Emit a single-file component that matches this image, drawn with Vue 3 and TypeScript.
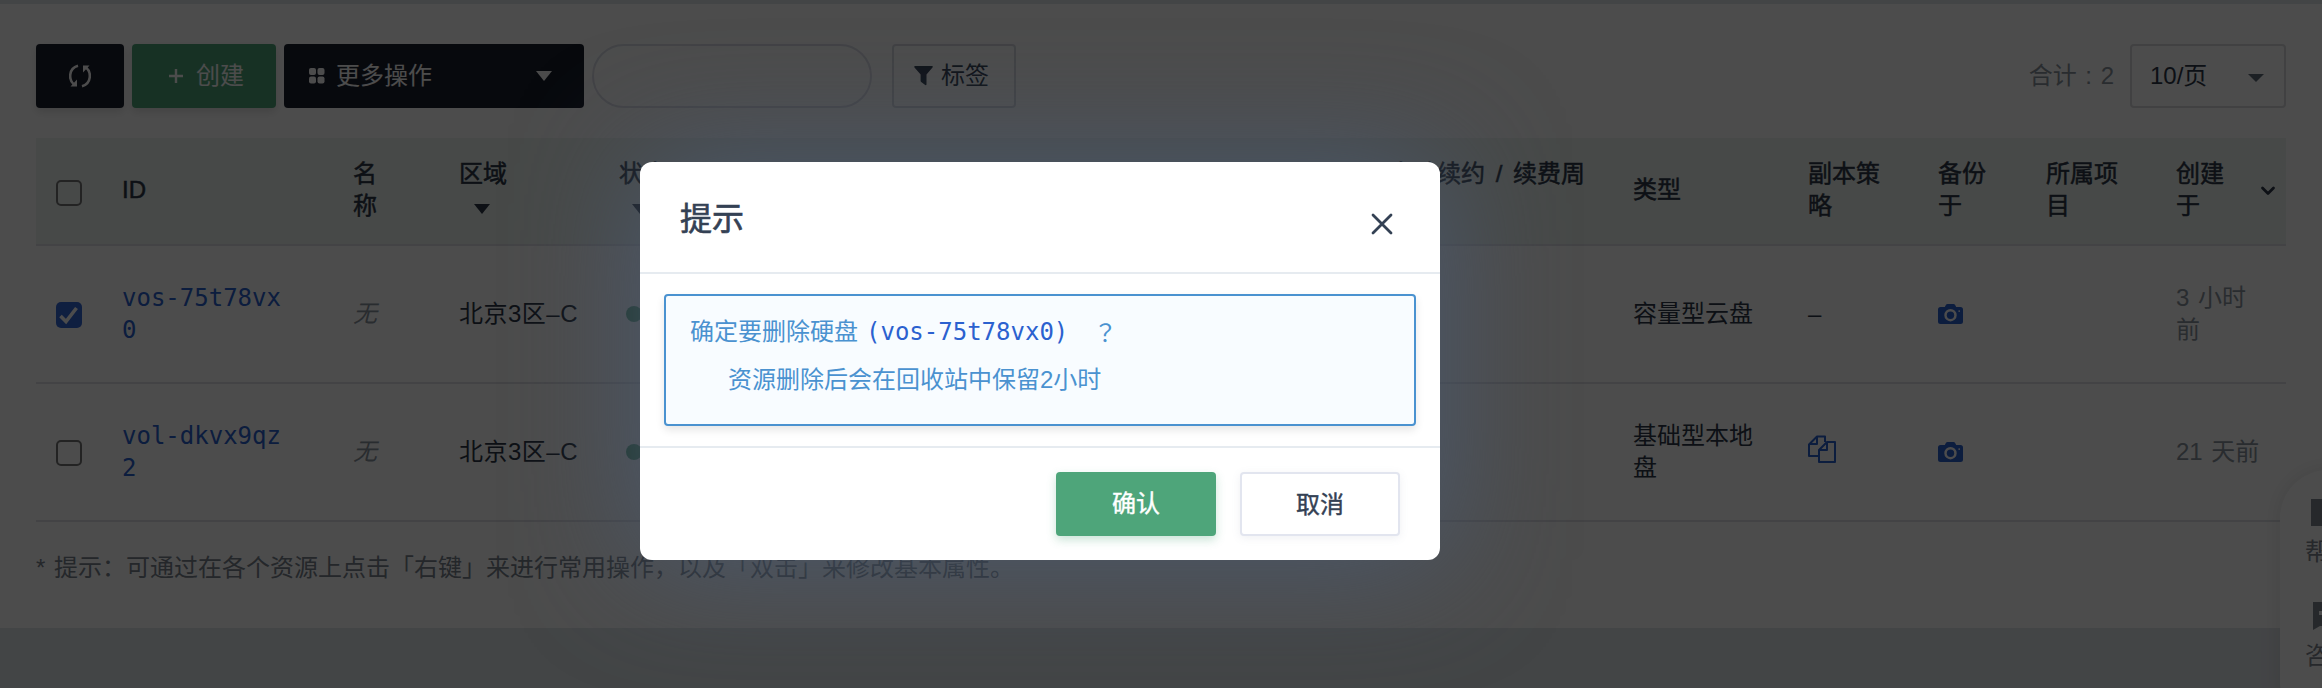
<script setup lang="ts">
interface Column {
  key: string
  lines: string[]
  filter?: boolean
  sort?: boolean
}

interface Volume {
  id: string[]
  zone: string
  checked: boolean
  type: string[]
  copies: boolean
  created: string[]
}

const columns: Column[] = [
  { key: 'id', lines: ['ID'] },
  { key: 'name', lines: ['名', '称'] },
  { key: 'zone', lines: ['区域'], filter: true },
  { key: 'status', lines: ['状态'], filter: true },
  { key: 'renew', lines: ['自动续约 / 续费周', '期'] },
  { key: 'type', lines: ['类型'] },
  { key: 'policy', lines: ['副本策', '略'] },
  { key: 'backup', lines: ['备份', '于'] },
  { key: 'project', lines: ['所属项', '目'] },
  { key: 'created', lines: ['创建', '于'], sort: true },
]

const volumes: Volume[] = [
  { id: ['vos-75t78vx', '0'], zone: '北京3区–C', checked: true, type: ['容量型云盘'], copies: false, created: ['3 小时', '前'] },
  { id: ['vol-dkvx9qz', '2'], zone: '北京3区–C', checked: false, type: ['基础型本地', '盘'], copies: true, created: ['21 天前'] },
]
</script>

<template>
  <div class="page">
    <main class="card">
      <div class="toolbar">
        <button class="btn dark refresh">
          <svg width="22" height="24" viewBox="0 0 22 24" fill="none" stroke="currentColor" stroke-width="2.600">
            <path d="M9 1.800C-.6 4.400-.6 16 5 20.500" />
            <path d="M13 22.200C22.600 19.600 22.600 8 17 3.500" />
            <path d="M1.500 22.500H8V15.500z M20.500 1.500H14V8.500z" fill="currentColor" stroke="none" />
          </svg>
        </button>
        <button class="btn green create">
          <svg width="14" height="14" viewBox="0 0 14 14" stroke="currentColor" stroke-width="2.400"><path d="M7 0v14M0 7h14" /></svg>
          <span>创建</span>
        </button>
        <button class="btn dark more">
          <svg width="16" height="16" viewBox="0 0 16 16" fill="currentColor">
            <rect width="7" height="7" rx="2" /><rect x="8.500" width="7" height="7" rx="2" />
            <rect y="8.500" width="7" height="7" rx="2" /><rect x="8.500" y="8.500" width="7" height="7" rx="2" />
          </svg>
          <span>更多操作</span>
          <svg class="caret" width="16" height="10" viewBox="0 0 16 10" fill="currentColor"><path d="M0 0h16L8 10z" /></svg>
        </button>
        <div class="search"></div>
        <button class="btn outline tag">
          <svg width="19" height="20" viewBox="0 0 19 20" fill="currentColor"><path d="M.8 0h17.400q1 .5.300 1.500L12.500 8.500V18.500q-.3 1-1.300.5L7.200 16q-.6-.5-.6-1.200V8.500L.5 1.500Q-.2.600.8 0z" /></svg>
          <span>标签</span>
        </button>
        <span class="total">合计 : 2</span>
        <div class="select">
          <span>10/页</span>
          <svg width="16" height="8" viewBox="0 0 16 8" fill="currentColor"><path d="M0 0h16L8 8z" /></svg>
        </div>
      </div>

      <div class="grid head">
        <div class="cell check"><span class="box"></span></div>
        <div v-for="col in columns" :key="col.key" class="cell" :class="col.key">
          <div class="lines">
            <span v-for="line in col.lines" :key="line">{{ line }}</span>
            <svg v-if="col.filter" class="filter" width="16" height="10" viewBox="0 0 16 10" fill="currentColor"><path d="M0 0h16L8 10z" /></svg>
          </div>
          <svg v-if="col.sort" class="sort" width="16" height="10" viewBox="0 0 16 10" fill="none" stroke="currentColor" stroke-width="2.800" stroke-linecap="round" stroke-linejoin="round"><path d="M2.500 2L8 7.500L13.500 2" /></svg>
        </div>
      </div>

      <div v-for="(vol, i) in volumes" :key="i" class="grid row">
        <div class="cell check">
          <span class="box" :class="{ on: vol.checked }">
            <svg v-if="vol.checked" width="20" height="20" viewBox="0 0 20 20" fill="none" stroke="currentColor" stroke-width="3.600"><path d="M1.500 11L7 16.500L17.500 3" /></svg>
          </span>
        </div>
        <div class="cell link"><div class="lines"><span v-for="l in vol.id" :key="l">{{ l }}</span></div></div>
        <div class="cell none">无</div>
        <div class="cell place">{{ vol.zone }}</div>
        <div class="cell"><span class="dot"></span></div>
        <div class="cell"></div>
        <div class="cell"><div class="lines"><span v-for="l in vol.type" :key="l">{{ l }}</span></div></div>
        <div class="cell">
          <svg v-if="vol.copies" class="copy" width="28" height="28" viewBox="0 0 28 28" fill="none" stroke="currentColor" stroke-width="2" stroke-linejoin="round">
            <path d="M17 7V1.500H9L1 9.500V21H11" /><path d="M9 1.500V9H1" />
            <path d="M19 7H27V27H11V15z" /><path d="M19 7V15H11" />
          </svg>
          <span v-else>–</span>
        </div>
        <div class="cell blue">
          <svg width="25" height="20" viewBox="0 0 25 20" fill="currentColor">
            <path fill-rule="evenodd" d="M9.500 0h6q1 0 1.500.8l1.200 2.200H22.500a2.500 2.500 0 0 1 2.500 2.500V17.500a2.500 2.500 0 0 1-2.500 2.500H2.500A2.500 2.500 0 0 1 0 17.500V5.500A2.500 2.500 0 0 1 2.500 3H6.800L8 .8Q8.500 0 9.500 0zM12.500 5a6.200 6.200 0 1 0 0 12.400a6.200 6.200 0 0 0 0-12.400zM21.200 6.200a.9.900 0 1 0 0 1.800a.9.900 0 0 0 0-1.800z" />
            <circle cx="12.500" cy="11.200" r="3.700" />
          </svg>
        </div>
        <div class="cell"></div>
        <div class="cell muted"><div class="lines"><span v-for="l in vol.created" :key="l">{{ l }}</span></div></div>
      </div>

      <p class="hint">* 提示：可通过在各个资源上点击「右键」来进行常用操作，以及「双击」来修改基本属性。</p>
    </main>

    <aside class="helper">
      <div class="helper-item">
        <svg width="36" height="27" viewBox="0 0 36 27" fill="currentColor"><path d="M0 0h36v27H0z" /></svg>
        <span>帮助</span>
      </div>
      <div class="helper-item">
        <svg width="32" height="28" viewBox="0 0 32 28"><path d="M0 0h32v24H7L0 28z" fill="currentColor" /><path d="M6 9h20v4H6z" fill="#fff" /></svg>
        <span>咨询</span>
      </div>
    </aside>

    <div class="overlay">
      <section class="modal" role="dialog">
        <header class="modal-head">
          <h2>提示</h2>
          <svg width="22" height="22" viewBox="0 0 22 22" fill="none" stroke="currentColor" stroke-width="2.800" stroke-linecap="round"><path d="M2 2L20 20M20 2L2 20" /></svg>
        </header>
        <div class="modal-body">
          <div class="notice">
            <p>确定要删除硬盘<b class="target">(vos-75t78vx0)</b><span class="mark">？</span></p>
            <p class="detail">资源删除后会在回收站中保留2小时</p>
          </div>
        </div>
        <footer class="modal-foot">
          <button class="btn green confirm">确认</button>
          <button class="btn outline cancel">取消</button>
        </footer>
      </section>
    </div>
  </div>
</template>

<style>
html, body { margin: 0; overflow: hidden; }
</style>

<style scoped>
.page {
  position: relative;
  box-sizing: border-box;
  width: 2322px;
  height: 688px;
  padding-top: 4px;
  overflow: hidden;
  background: #e2e6eb;
  font: 24px/32px "Liberation Sans", "Noto Sans CJK SC", sans-serif;
  color: #2d3748;
  word-spacing: 2px;
}
.page * { box-sizing: border-box; }
svg { display: block; flex: none; }
.card { height: 624px; padding: 40px 36px 0; background: #fff; }

.toolbar { display: flex; align-items: center; height: 64px; margin-bottom: 30px; }
.btn {
  display: flex;
  align-items: center;
  height: 64px;
  margin: 0;
  padding: 0;
  border: 0;
  border-radius: 4px;
  font: inherit;
  color: #fff;
}
.dark { background: #1a1f2d; }
.green { background: #4ea57a; }
.outline { border: 2px solid #e2e5ef; background: #fff; color: #344154; }
.refresh { justify-content: center; width: 88px; margin-right: 8px; box-shadow: 0 4px 8px rgba(0, 0, 0, .12); }
.create { width: 144px; margin-right: 8px; padding-left: 37px; gap: 13px; box-shadow: 0 4px 8px rgba(0, 0, 0, .12); }
.more { width: 300px; margin-right: 8px; padding: 0 32px 0 25px; gap: 11px; }
.caret { margin-left: auto; }
.search { width: 280px; height: 64px; margin-right: 20px; border: 2px solid #dcdee8; border-radius: 32px; }
.toolbar .outline { border-color: #d8dbe2; background: none; }
.tag { width: 124px; padding-left: 20px; gap: 8px; }
.total { margin-left: auto; margin-right: 16px; color: #8b939e; }
.select {
  display: flex;
  align-items: center;
  justify-content: space-between;
  width: 156px;
  height: 64px;
  padding: 0 20px 0 18px;
  border: 2px solid #d9dadd;
  border-radius: 4px;
}
.select svg { margin-top: 4px; color: #5f6b79; }

.grid {
  display: grid;
  grid-template-columns: 86px 231px 106px 160px 770px 244px 175px 130px 108px 130px 110px;
  border-bottom: 2px solid #e0e2e8;
}
.cell { display: flex; align-items: center; white-space: nowrap; }
.lines { display: flex; flex-direction: column; }
.head { height: 108px; background: #eff5f2; -webkit-text-stroke: .5px currentColor; }
.head .lines { margin-top: -2px; }
.row { height: 138px; }
.check { padding-left: 20px; }
.box { display: flex; align-items: center; justify-content: center; width: 26px; height: 26px; margin-top: 2px; border: 2px solid #767676; border-radius: 5px; }
.head .box { margin-top: 3px; }
.box.on { border: 0; background: #3568d8; color: #fff; }
.filter { margin: 14px 0 8px 15px; }
.status .filter { margin-left: 13px; }
.renew { word-spacing: 4px; }
.sort { margin-left: 36px; }
.link, .blue, .copy { color: #2b61cf; }
.link { font-family: "DejaVu Sans Mono", monospace; }
.none { font-style: italic; color: #8b939e; }
.place { letter-spacing: .5px; }
.muted { color: #8b939e; }
.dot { width: 16px; height: 16px; margin-left: 7px; border-radius: 50%; background: #4ea57a; }
.copy { margin-top: -6px; }
.hint { margin: 30px 0 0; color: #7a828e; white-space: nowrap; }

.helper {
  position: absolute;
  left: 2280px;
  top: 470px;
  width: 98px;
  height: 260px;
  padding-top: 29px;
  border-radius: 48px;
  background: #fff;
  box-shadow: 0 0 22px rgba(0, 0, 0, .1);
  color: #7f8792;
}
.helper-item { display: flex; flex-direction: column; align-items: center; height: 103px; gap: 10px; }

.overlay {
  position: absolute;
  inset: 0;
  display: flex;
  justify-content: center;
  padding: 162px 242px 0 0;
  background: rgba(0, 0, 0, .7);
}
.modal { width: 800px; height: 398px; border-radius: 12px; background: #fff; box-shadow: 0 0 120px #4c5a6e; }
.modal-head { display: flex; align-items: center; justify-content: space-between; height: 112px; padding: 0 47px 0 40px; border-bottom: 2px solid #e6ebf0; color: #344154; }
.modal-head svg { margin-top: 14px; }
h2 { margin: 4px 0 0; font-size: 32px; line-height: 48px; font-weight: 400; -webkit-text-stroke: .6px currentColor; }
.modal-body { height: 174px; padding: 20px 24px; border-bottom: 2px solid #e6ebf0; }
.notice { height: 132px; padding: 12px 24px; border: 2px solid #4a92d0; border-radius: 4px; background: #f8fcff; color: #4a92d0; box-shadow: 0 4px 8px rgba(0, 0, 0, .1); }
.notice p { display: flex; height: 48px; margin: 0; line-height: 48px; white-space: nowrap; }
.target { margin-left: 8px; font-family: "DejaVu Sans Mono", monospace; font-weight: 400; color: #2b61cf; }
.mark { margin-left: 25px; font-family: "Noto Sans CJK TC", sans-serif; }
.notice .detail { padding-left: 38px; }
.modal-foot { display: flex; justify-content: flex-end; gap: 24px; padding: 24px 40px; }
.modal-foot .btn { justify-content: center; width: 160px; -webkit-text-stroke: .4px currentColor; }
.confirm { box-shadow: 0 4px 10px rgba(78, 165, 122, .3); }
.modal-foot .cancel { padding-top: 2px; color: #344154; box-shadow: 0 2px 8px rgba(120, 130, 160, .12); }
</style>
